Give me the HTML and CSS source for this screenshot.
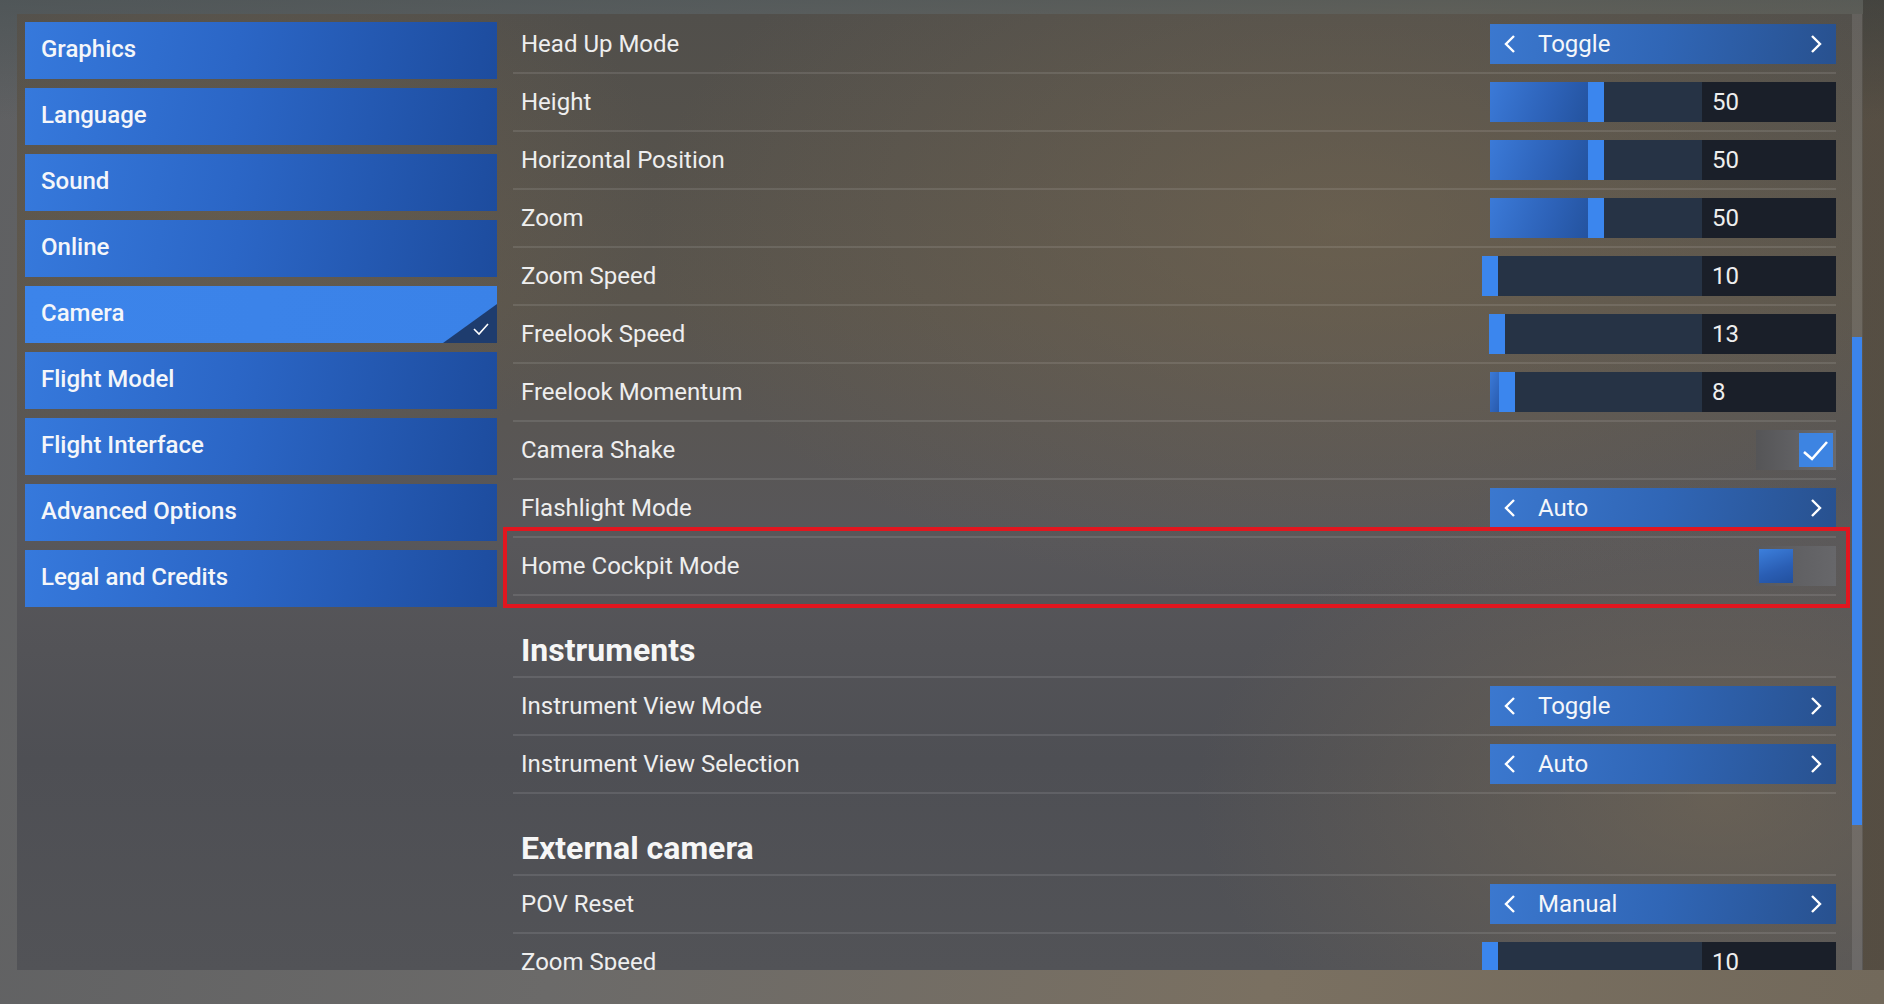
FILE: index.html
```html
<!DOCTYPE html>
<html lang="en">
<head>
  <meta charset="utf-8">
  <title>Options - Camera</title>
  <link rel="stylesheet" href="styles.css">
</head>
<body>
  <div class="screen">
    <div class="panel">
      <nav class="sidebar">
        <div class="nav-item">Graphics</div>
        <div class="nav-item">Language</div>
        <div class="nav-item">Sound</div>
        <div class="nav-item">Online</div>
        <div class="nav-item active">Camera
          <span class="corner">
            <svg width="16" height="13" viewBox="0 0 16 13"><polyline points="1,6 6,11 15,1" fill="none" stroke="#fff" stroke-width="1.6"/></svg>
          </span>
        </div>
        <div class="nav-item">Flight Model</div>
        <div class="nav-item">Flight Interface</div>
        <div class="nav-item">Advanced Options</div>
        <div class="nav-item">Legal and Credits</div>
      </nav>

      <div class="content">
        <div class="row">
          <span class="label">Head Up Mode</span>
          <div class="selector">
            <svg class="chev" width="14" height="18" viewBox="0 0 14 18"><polyline points="11,1 3,9 11,17"/></svg>
            <span class="selector-text">Toggle</span>
            <svg class="chev" width="14" height="18" viewBox="0 0 14 18"><polyline points="3,1 11,9 3,17"/></svg>
          </div>
        </div>
        <div class="row">
          <span class="label">Height</span>
          <div class="slider">
            <div class="track"><div class="fill" style="--v:50%"></div><div class="knob" style="--v:50%"></div></div>
            <div class="value">50</div>
          </div>
        </div>
        <div class="row">
          <span class="label">Horizontal Position</span>
          <div class="slider">
            <div class="track"><div class="fill" style="--v:50%"></div><div class="knob" style="--v:50%"></div></div>
            <div class="value">50</div>
          </div>
        </div>
        <div class="row">
          <span class="label">Zoom</span>
          <div class="slider">
            <div class="track"><div class="fill" style="--v:50%"></div><div class="knob" style="--v:50%"></div></div>
            <div class="value">50</div>
          </div>
        </div>
        <div class="row">
          <span class="label">Zoom Speed</span>
          <div class="slider">
            <div class="track"><div class="fill" style="--v:0%"></div><div class="knob" style="--v:0%"></div></div>
            <div class="value">10</div>
          </div>
        </div>
        <div class="row">
          <span class="label">Freelook Speed</span>
          <div class="slider">
            <div class="track"><div class="fill" style="--v:3.3%"></div><div class="knob" style="--v:3.3%"></div></div>
            <div class="value">13</div>
          </div>
        </div>
        <div class="row">
          <span class="label">Freelook Momentum</span>
          <div class="slider">
            <div class="track"><div class="fill" style="--v:8%"></div><div class="knob" style="--v:8%"></div></div>
            <div class="value">8</div>
          </div>
        </div>
        <div class="row">
          <span class="label">Camera Shake</span>
          <div class="check on">
            <span class="box">
              <svg width="34" height="34" viewBox="0 0 34 34"><polyline points="5,19 13,26 28,9" fill="none" stroke="#fff" stroke-width="2.6"/></svg>
            </span>
          </div>
        </div>
        <div class="row">
          <span class="label">Flashlight Mode</span>
          <div class="selector">
            <svg class="chev" width="14" height="18" viewBox="0 0 14 18"><polyline points="11,1 3,9 11,17"/></svg>
            <span class="selector-text">Auto</span>
            <svg class="chev" width="14" height="18" viewBox="0 0 14 18"><polyline points="3,1 11,9 3,17"/></svg>
          </div>
        </div>
        <div class="row highlight">
          <span class="label">Home Cockpit Mode</span>
          <div class="check">
            <span class="box"></span>
          </div>
        </div>

        <div class="heading">Instruments</div>
        <div class="row">
          <span class="label">Instrument View Mode</span>
          <div class="selector">
            <svg class="chev" width="14" height="18" viewBox="0 0 14 18"><polyline points="11,1 3,9 11,17"/></svg>
            <span class="selector-text">Toggle</span>
            <svg class="chev" width="14" height="18" viewBox="0 0 14 18"><polyline points="3,1 11,9 3,17"/></svg>
          </div>
        </div>
        <div class="row">
          <span class="label">Instrument View Selection</span>
          <div class="selector">
            <svg class="chev" width="14" height="18" viewBox="0 0 14 18"><polyline points="11,1 3,9 11,17"/></svg>
            <span class="selector-text">Auto</span>
            <svg class="chev" width="14" height="18" viewBox="0 0 14 18"><polyline points="3,1 11,9 3,17"/></svg>
          </div>
        </div>

        <div class="heading">External camera</div>
        <div class="row">
          <span class="label">POV Reset</span>
          <div class="selector">
            <svg class="chev" width="14" height="18" viewBox="0 0 14 18"><polyline points="11,1 3,9 11,17"/></svg>
            <span class="selector-text">Manual</span>
            <svg class="chev" width="14" height="18" viewBox="0 0 14 18"><polyline points="3,1 11,9 3,17"/></svg>
          </div>
        </div>
        <div class="row">
          <span class="label">Zoom Speed</span>
          <div class="slider">
            <div class="track"><div class="fill" style="--v:0%"></div><div class="knob" style="--v:0%"></div></div>
            <div class="value">10</div>
          </div>
        </div>
      </div>

      <div class="scrollbar"><div class="scroll-thumb"></div></div>
    </div>
  </div>
</body>
</html>
```

FILE: styles.css
```css
body {
    margin: 0;
    width: 1884px;
    height: 1004px;
    overflow: hidden;
    font-family: Roboto, "Noto Sans", "Liberation Sans", sans-serif;
    color: #eeeeee;
    background:
        linear-gradient(90deg, transparent 1863px, rgba(30, 25, 20, 0.35) 1863px) 0 0 / 100% 970px no-repeat,
        linear-gradient(180deg, rgba(70, 80, 82, 0.6) 0, transparent 120px),
        linear-gradient(100deg, #5f6062 0%, #6b6a69 35%, #7a7061 70%, #72695b 100%);
}

.screen {
    box-sizing: border-box;
    height: 1004px;
    padding: 14px 21px 34px 17px;
}

.panel {
    display: flex;
    height: 100%;
    overflow: hidden;
    background:
        radial-gradient(ellipse 700px 380px at 72% 22%, rgba(125, 108, 82, 0.45), transparent),
        radial-gradient(ellipse 520px 320px at 92% 82%, rgba(128, 112, 86, 0.5), transparent),
        radial-gradient(ellipse 420px 300px at 12% 18%, rgba(120, 104, 80, 0.4), transparent),
        linear-gradient(180deg, #514f4b 0%, #5a554d 30%, #58575a 55%, #4e4f54 78%, #525357 100%);
}

/* left menu */
.sidebar {
    width: 488px;
    flex-shrink: 0;
    box-sizing: border-box;
    padding: 8px;
    display: flex;
    flex-direction: column;
    gap: 9px;
}

.nav-item {
    position: relative;
    height: 57px;
    box-sizing: border-box;
    display: flex;
    align-items: center;
    padding: 0 0 3px 16px;
    font-size: 24px;
    font-weight: 500;
    color: #f4f6fa;
    background: linear-gradient(100deg, #3679dc 0%, #2b66c6 45%, #1d4c9e 100%);
}

.nav-item.active {
    background: linear-gradient(100deg, #3c84ea 0%, #3a82e8 100%);
}

.corner {
    position: absolute;
    right: 0;
    bottom: 0;
    width: 54px;
    height: 39px;
    background: #1e3c6e;
    clip-path: polygon(100% 0, 100% 100%, 0 100%);
}

.corner svg {
    position: absolute;
    left: 30px;
    top: 19px;
}

/* settings list */
.content {
    flex: 1;
    padding: 2px 0 0 8px;
    min-width: 0;
}

.row {
    position: relative;
    box-sizing: border-box;
    height: 58px;
    display: flex;
    align-items: center;
    justify-content: space-between;
    padding-left: 8px;
    border-bottom: 2px solid rgba(255, 255, 255, 0.1);
}

.label {
    font-size: 24px;
}

.heading {
    box-sizing: border-box;
    height: 82px;
    display: flex;
    align-items: flex-end;
    padding: 0 0 6px 8px;
    font-size: 32px;
    line-height: 40px;
    font-weight: 700;
    color: #f6f6f6;
    border-bottom: 2px solid rgba(255, 255, 255, 0.1);
}

.highlight::after {
    content: "";
    position: absolute;
    left: -10px;
    right: -14px;
    top: -11px;
    bottom: -14px;
    border: 4px solid #e2161f;
}

.selector {
    width: 346px;
    height: 40px;
    box-sizing: border-box;
    display: flex;
    align-items: center;
    padding: 0 13px;
    background: linear-gradient(100deg, #3b78cf 0%, #3066b6 50%, #28518f 100%);
}

.chev polyline {
    fill: none;
    stroke: #ffffff;
    stroke-width: 2.4;
}

.selector-text {
    flex: 1;
    margin-left: 21px;
    font-size: 24px;
    color: #f4f6fa;
}

.slider {
    width: 346px;
    height: 40px;
    display: flex;
}

.track {
    position: relative;
    width: 212px;
    background: #263345;
}

.fill {
    width: var(--v);
    height: 100%;
    background: linear-gradient(110deg, #3b7ad8 0%, #2d62b8 55%, #22509a 100%);
}

.knob {
    position: absolute;
    top: 0;
    left: calc(var(--v) - 8px);
    width: 16px;
    height: 100%;
    background: #3b86ee;
}

.value {
    flex: 1;
    display: flex;
    align-items: center;
    padding-left: 10px;
    font-size: 24px;
    background: #1a1f29;
}

.check {
    width: 80px;
    height: 40px;
    box-sizing: border-box;
    display: flex;
    align-items: center;
    padding: 0 3px;
    background: linear-gradient(90deg, #59595c 0%, #67676a 100%);
}

.check.on {
    justify-content: flex-end;
    background: linear-gradient(90deg, #555557 0%, #636366 60%, #6a6a6d 100%);
}

.box {
    width: 34px;
    height: 34px;
    background: linear-gradient(160deg, #3c7fdc 0%, #2a5eb4 60%, #22509e 100%);
}

.check.on .box {
    background: #3d84e2;
}

.box svg {
    display: block;
}

.scrollbar {
    width: 10px;
    flex-shrink: 0;
    margin: 0 1px 0 16px;
    background: rgba(255, 255, 255, 0.1);
}

.scroll-thumb {
    margin-top: 323px;
    height: 488px;
    background: #3b84ec;
}
```
